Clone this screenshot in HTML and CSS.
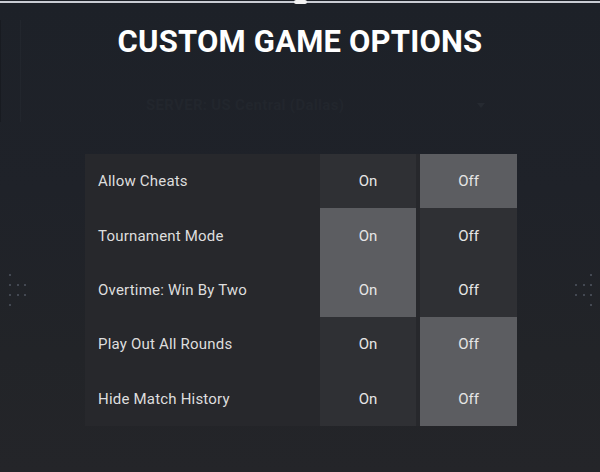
FILE: index.html
```html
<!DOCTYPE html>
<html lang="en">
<head>
<meta charset="utf-8">
<title>Custom Game Options</title>
<link rel="stylesheet" href="styles.css">
</head>
<body>
<div class="screen">
  <div class="topline"><span class="pill"></span></div>
  <div class="edge-left"></div>
  <h1 class="title">CUSTOM GAME OPTIONS</h1>
  <div class="server">
    <span class="server-text">SERVER: US Central (Dallas)</span>
    <svg class="server-icon" width="10" height="10" viewBox="0 0 10 10"><path d="M1 3 L5 8 L9 3 Z" fill="#262a31"/></svg>
  </div>
  <div class="options">
    <div class="label">Allow Cheats</div>
    <div class="cell">On</div>
    <div class="cell sel">Off</div>

    <div class="label">Tournament Mode</div>
    <div class="cell sel">On</div>
    <div class="cell">Off</div>

    <div class="label">Overtime: Win By Two</div>
    <div class="cell sel">On</div>
    <div class="cell">Off</div>

    <div class="label">Play Out All Rounds</div>
    <div class="cell">On</div>
    <div class="cell sel">Off</div>

    <div class="label">Hide Match History</div>
    <div class="cell">On</div>
    <div class="cell sel">Off</div>
  </div>
  <div class="dots dots-left">
    <i class="d1"></i>
    <span class="drow"><i></i><i></i><i></i></span>
    <span class="drow"><i></i><i></i><i></i></span>
    <i class="d1"></i>
  </div>
  <div class="dots dots-right">
    <i class="d1"></i>
    <span class="drow"><i></i><i></i><i></i></span>
    <span class="drow"><i></i><i></i><i></i></span>
    <i class="d1"></i>
  </div>
</div>
</body>
</html>
```

FILE: styles.css
```css
html, body {
  margin: 0;
  padding: 0;
  background: #1e2229;
}

.screen {
  position: relative;
  width: 600px;
  height: 472px;
  overflow: hidden;
  background: linear-gradient(180deg, #1d2128 0%, #1f2229 40%, #222428 75%, #242529 100%);
  font-family: Roboto, "Liberation Sans", sans-serif;
  color: #e2e2e2;
}

.topline {
  height: 2px;
  margin-top: 1px;
  background: #c9ccd4;
  display: flex;
  justify-content: center;
}

.pill {
  position: relative;
  top: -1px;
  width: 13px;
  height: 4px;
  border-radius: 2px;
  background: #f2f2f2;
}

.edge-left {
  position: absolute;
  left: 0;
  top: 20px;
  width: 21px;
  height: 102px;
  border-left: 1px solid #181b21;
  border-right: 1px solid #22262d;
  box-sizing: border-box;
}

.title {
  margin: 21px 0 0;
  text-align: center;
  font-size: 31px;
  line-height: 36px;
  font-weight: 700;
  letter-spacing: 0.2px;
  color: #ffffff;
}

.server {
  display: flex;
  align-items: center;
  justify-content: space-between;
  margin: 35px 0 0 146px;
  width: 340px;
  height: 20px;
}

.server-text {
  font-size: 15px;
  font-weight: 700;
  color: #22262d;
  letter-spacing: 0.3px;
}

.options {
  display: grid;
  grid-template-columns: 235px 96px 4px 97px;
  grid-auto-rows: 54.4px;
  width: 432px;
  margin: 39px 0 0 85px;
  background: #27282c;
}

.label {
  grid-column: 1;
  display: flex;
  align-items: center;
  padding-left: 13px;
  font-size: 15px;
  letter-spacing: 0.2px;
  color: #dedede;
}

.cell {
  grid-column: 2;
  display: flex;
  align-items: center;
  justify-content: center;
  font-size: 15px;
  color: #e6e6e6;
  background: #2f3034;
}

.cell + .cell {
  grid-column: 4;
}

.cell.sel {
  background: #5c5d61;
}

.dots {
  position: absolute;
  top: 274px;
  width: 17px;
  display: flex;
  flex-direction: column;
  gap: 8px;
}

.dots i {
  display: block;
  width: 2px;
  height: 2px;
  background: #434852;
}

.dots-left { left: 9px; }
.dots-right { left: 575px; align-items: flex-end; }

.drow {
  display: flex;
  justify-content: space-between;
  width: 17px;
}
```
